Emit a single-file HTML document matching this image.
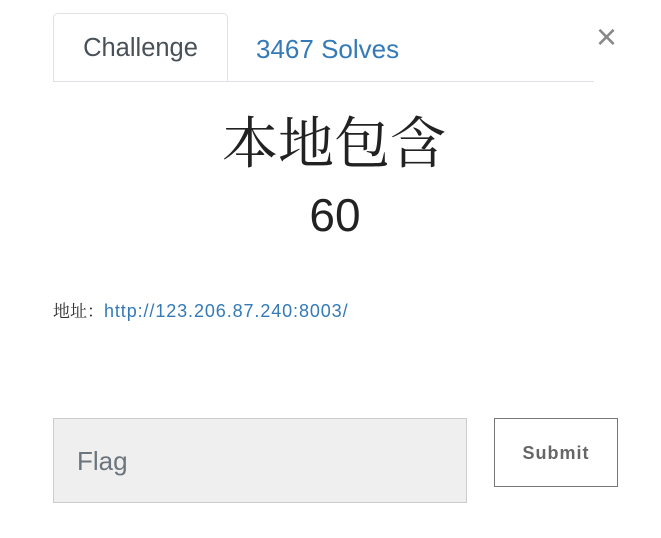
<!DOCTYPE html>
<html><head><meta charset="utf-8"><style>
body{margin:0;width:661px;height:538px;background:#fff;font-family:"Liberation Sans",sans-serif;position:relative;overflow:hidden}
.a{position:absolute}
.tab{left:53px;top:13px;width:175px;height:69px;border:1px solid #dee2e6;border-bottom:none;border-radius:5px 5px 0 0;background:#fff;box-sizing:border-box}
.line{left:53px;top:81px;width:541px;height:1px;background:#dee2e6}
.t1{left:53px;width:175px;top:34px;text-align:center;font-size:25.5px;color:#495057}
.t2{left:256px;top:34px;font-size:26px;color:#337ab7}
.x{left:596px;top:16px;font-size:36px;color:#888;}
.title{left:0;width:668px;top:100px;text-align:center;font-family:"Liberation Serif","Noto Serif CJK SC",serif;font-size:56px;color:#222}
.pts{left:0;width:670px;top:188px;text-align:center;font-size:46px;color:#222}
.addr{left:53px;top:297px;font-size:17px;color:#333;font-family:"Liberation Serif","Noto Serif CJK SC",serif}
.addr span{color:#337ab7;font-family:"Liberation Sans",sans-serif;font-size:18px;letter-spacing:0.9px}
.flag{left:53px;top:418px;width:414px;height:85px;background:#efefef;border:1px solid #ccc;box-sizing:border-box;font-size:26px;color:#6c757d;padding:27px 0 0 23px}
.sub{left:494px;top:418px;width:124px;height:69px;border:1px solid #777;box-sizing:border-box;text-align:center;line-height:69px;font-size:18px;font-weight:bold;color:#666;letter-spacing:1px}
</style></head><body>
<div class="a tab"></div>
<div class="a line"></div>
<div class="a t1">Challenge</div>
<div class="a t2">3467 Solves</div>
<div class="a x">×</div>
<div class="a title">本地包含</div>
<div class="a pts">60</div>
<div class="a addr">地址：<span>http://123.206.87.240:8003/</span></div>
<div class="a flag">Flag</div>
<div class="a sub">Submit</div>
</body></html>
